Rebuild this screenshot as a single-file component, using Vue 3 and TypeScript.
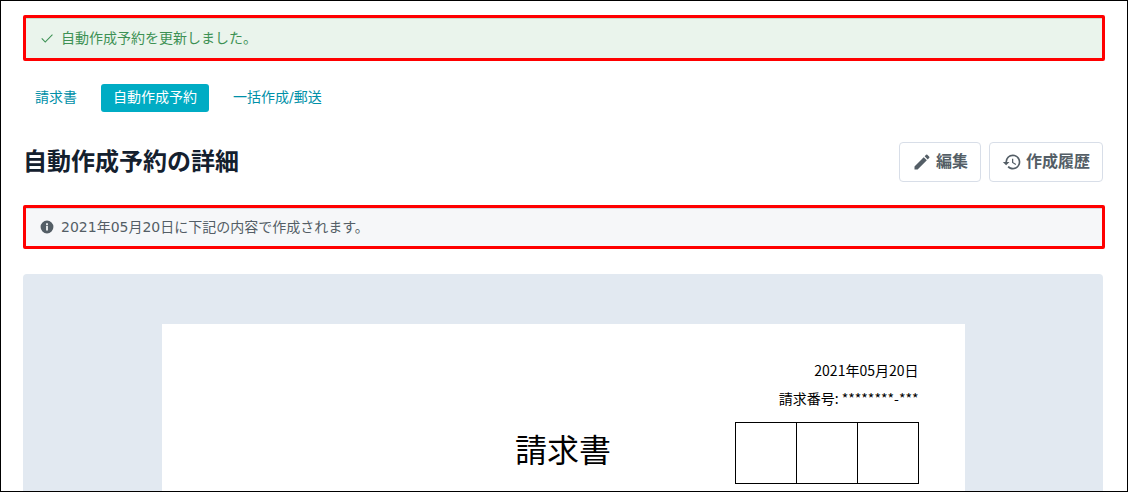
<script setup lang="ts">
interface Tab {
  label: string
  active: boolean
}

const tabs: Tab[] = [
  { label: '請求書', active: false },
  { label: '自動作成予約', active: true },
  { label: '一括作成/郵送', active: false },
]

const scheduledDate = '2021年05月20日'
const invoiceNumber = '********-***'
const stampCount = 3
</script>

<template>
  <main class="page">
    <div class="alert alert-success" role="status">
      <svg class="alert-icon" viewBox="0 0 24 24" aria-hidden="true">
        <path d="M9 17.400 3.600 12l-1.300 1.300L9 20 22 7 20.700 5.700z" />
      </svg>
      <span>自動作成予約を更新しました。</span>
    </div>

    <nav class="tabs">
      <a
        v-for="tab in tabs"
        :key="tab.label"
        href="#"
        class="tab"
        :class="{ active: tab.active }"
        :aria-current="tab.active ? 'page' : undefined"
      >{{ tab.label }}</a>
    </nav>

    <header class="heading">
      <h1>自動作成予約の詳細</h1>
      <div class="actions">
        <button type="button" class="action">
          <svg viewBox="0 0 24 24" aria-hidden="true">
            <path d="M3 17.25V21h3.75L17.81 9.94l-3.75-3.75L3 17.25zM20.71 7.04a1 1 0 0 0 0-1.41l-2.34-2.34a1 1 0 0 0-1.41 0l-1.83 1.83 3.75 3.75 1.83-1.83z" />
          </svg>
          編集
        </button>
        <button type="button" class="action">
          <svg viewBox="0 0 24 24" aria-hidden="true">
            <path d="M13 3a9 9 0 0 0-9 9H1l3.89 3.89.07.14L9 12H6a7 7 0 1 1 2.06 4.94l-1.42 1.42A9 9 0 1 0 13 3zm-1 5v5l4.28 2.54.72-1.21-3.5-2.08V8H12z" />
          </svg>
          作成履歴
        </button>
      </div>
    </header>

    <div class="alert alert-info" role="note">
      <svg class="alert-icon" viewBox="0 0 24 24" aria-hidden="true">
        <path d="M12 1a11 11 0 1 0 0 22 11 11 0 0 0 0-22zm1.5 17h-3v-8h3v8zm0-9.500h-3v-3h3v3z" />
      </svg>
      <span>{{ scheduledDate }}に下記の内容で作成されます。</span>
    </div>

    <section class="preview">
      <article class="sheet">
        <div class="meta">
          <div>{{ scheduledDate }}</div>
          <div>請求番号: {{ invoiceNumber }}</div>
        </div>
        <div class="title-row">
          <h2>請求書</h2>
          <div class="stamps">
            <div v-for="n in stampCount" :key="n" class="stamp"></div>
          </div>
        </div>
      </article>
    </section>
  </main>
</template>

<style>
body {
  margin: 0;
  background: #fff;
}
</style>

<style scoped>
.page {
  box-sizing: border-box;
  min-height: 100vh;
  display: flex;
  flex-direction: column;
  padding: 14px 22px 0;
  border: 1px solid #000;
  background: #fff;
  color: #545e66;
  font-family: "DejaVu Sans", "Noto Sans CJK JP", sans-serif;
  font-size: 14px;
  line-height: 20px;
}

.alert {
  display: flex;
  align-items: center;
  gap: 7px;
  padding: 9px 14px;
  border: 3px solid #f00;
  border-radius: 2px;
}

.alert-success {
  padding-block: 10px;
  background: #eaf4ec;
  box-shadow: inset 0 1px #c4e1cb;
  color: #3d9154;
}

.alert-info {
  background: #f6f7f9;
  box-shadow: inset 0 1px #d3dae2;
  color: #545e66;
}

.alert-icon {
  width: 14px;
  height: 14px;
  fill: currentColor;
}

.tabs {
  display: flex;
  gap: 12px;
  margin-top: 23px;
}

.tab {
  padding: 3px 12px 5px;
  border-radius: 3px;
  color: #0090a8;
  text-decoration: none;
}

.tab.active {
  background: #00acc4;
  color: #fff;
}

.heading {
  display: flex;
  align-items: center;
  justify-content: space-between;
  margin: 30px 2px 23px 0;
}

h1 {
  margin: 0;
  color: #14202e;
  font-size: 24px;
  line-height: 40px;
  font-weight: 700;
}

.actions {
  display: flex;
  gap: 8px;
}

.action {
  display: flex;
  align-items: center;
  gap: 4px;
  height: 40px;
  padding: 0 12px;
  border: 1px solid #d8dee8;
  border-radius: 4px;
  background: #fff;
  color: #545e66;
  font: inherit;
  font-size: 16px;
  font-weight: 700;
}

.action svg {
  width: 20px;
  height: 20px;
  fill: currentColor;
}

.preview {
  flex: 1;
  display: flex;
  justify-content: center;
  margin: 25px 2px 0 0;
  padding-top: 50px;
  border-radius: 4px 4px 0 0;
  background: #e2e9f1;
}

.sheet {
  box-sizing: border-box;
  width: 100%;
  max-width: 803px;
  padding: 32px 46px 7px;
  background: #fff;
  color: #000;
  font-family: "Noto Sans CJK JP", sans-serif;
}

.meta {
  line-height: 28px;
  text-align: right;
}

.title-row {
  display: grid;
  grid-template-columns: 1fr auto 1fr;
  align-items: start;
  margin-top: 10px;
}

h2 {
  grid-column: 2;
  margin: 0;
  font-size: 32px;
  line-height: 52px;
  font-weight: 400;
}

.stamps {
  display: flex;
  justify-self: end;
  border-left: 1px solid #000;
}

.stamp {
  width: 60px;
  height: 60px;
  border: 1px solid #000;
  border-left: 0;
}
</style>
